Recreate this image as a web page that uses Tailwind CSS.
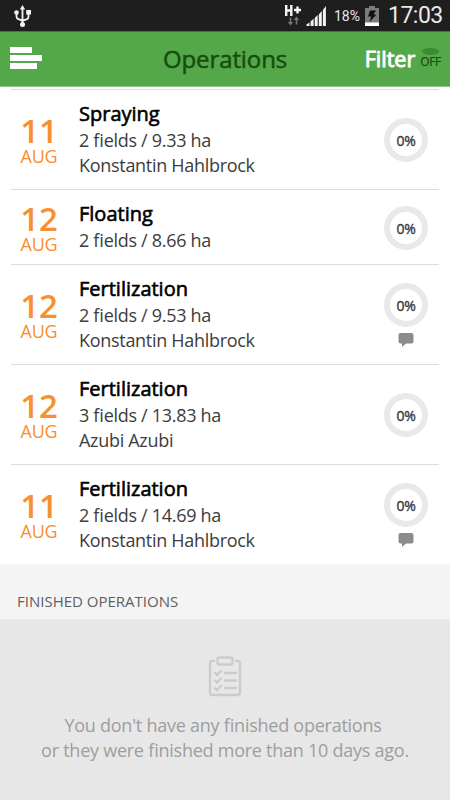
<!DOCTYPE html>
<html lang="en">
<head>
  <meta charset="UTF-8" />
  <meta name="viewport" content="width=device-width, initial-scale=1.0" />
  <script src="https://cdn.jsdelivr.net/npm/@tailwindcss/browser@4"></script>
  <title>Operations</title>
</head>
<body class="w-[450px] h-[800px] overflow-hidden flex flex-col bg-white font-['Open_Sans',sans-serif]">
  <!-- Status bar -->
  <div class="h-[31px] shrink-0 bg-[#1e1e1e] flex items-center pl-[13px] font-[Roboto,sans-serif] text-[#e8e8e8]">
    <svg class="mt-[2px] w-[20px] h-[24px]" viewBox="0 0 20 24" fill="none" stroke="#f5f5f5" stroke-width="1.8">
      <path d="M9.500 4v16M3.500 8v3.500q0 2 2 2.700l4 1.500 4.500-1.500q1.500-.7 1.500-2.700V8" />
      <path d="M9.500 0l2.700 4.500H6.800z" fill="#f5f5f5" stroke="none" />
      <circle cx="9.500" cy="19.500" r="2.500" fill="#f5f5f5" stroke="none" />
      <circle cx="3.500" cy="7.500" r="2.300" fill="#f5f5f5" stroke="none" />
      <path d="M13.200 5h4.800v4.500h-4.800z" fill="#f5f5f5" stroke="none" />
    </svg>
    <svg class="ml-[251px] w-[18px] h-[24px]" viewBox="0 0 18 24" fill="none">
      <path d="M2.200 1v11M7.300 1v11M2 6.500h5.500M10 6h7M13.500 2.500V9.500" stroke="#f5f5f5" stroke-width="2.400" />
      <path d="M6.500 13.500v6M12.500 20.500v-6" stroke="#777" stroke-width="1.600" />
      <path d="M3.700 18h5.600l-2.800 3.500zM9.700 16h5.600l-2.800-3.500z" fill="#777" />
    </svg>
    <svg class="ml-[4px] w-[21px] h-[24px]" viewBox="0 0 21 24" fill="#f2f2f2">
      <path d="M.5 22v-1.500l3-2V22zM4.600 22v-4.700l3-2.500V22zM8.700 22v-8l3-3v11zM12.800 22V10.500l3-3.500v15zM16.900 22V6l3-4v20z" />
    </svg>
    <span class="ml-[7px] w-[27px] text-[14px] leading-[20px] whitespace-nowrap pt-[1px]">18%</span>
    <svg class="ml-[3px] w-[16px] h-[22px]" viewBox="0 0 16 22">
      <path d="M5 1h6v2h4v18H1V3h4z" fill="#7c7c7c" />
      <path d="M1 17.500h14V21H1z" fill="#fff" />
      <path d="M6 5.500h6l-2.500 4h3L5.500 17l1.700-5.500H4z" fill="#111" />
    </svg>
    <span class="ml-[8px] text-[23px] leading-[30px] tracking-[-0.5px]">17:03</span>
  </div>

  <!-- Header -->
  <div class="h-[56px] shrink-0 bg-[#54a849] border-t border-t-[#397d30] border-b border-b-[#8cc685] grid grid-cols-[100px_1fr_100px] items-center">
    <div class="pl-[10px] pb-[2px] space-y-[2px]">
      <div class="w-[22px] h-[6px] bg-white"></div>
      <div class="w-[32px] h-[6px] bg-white"></div>
      <div class="w-[27px] h-[6px] bg-white"></div>
    </div>
    <h1 class="text-center text-[24px] leading-[30px] tracking-[-0.1px] text-[#174d10] [-webkit-text-stroke:0.5px]">Operations</h1>
    <div class="flex items-center justify-end pr-[9px] gap-[5px]">
      <span class="text-[21.500px] leading-[28px] text-white [-webkit-text-stroke:0.9px]">Filter</span>
      <div class="flex flex-col items-center pb-[1px]">
        <div class="w-[17px] h-[7px] rounded-[50%] bg-[#3c8b32]"></div>
        <span class="text-[12px] leading-[14px] tracking-[-0.3px] text-[#174d10] [-webkit-text-stroke:0.2px]">OFF</span>
      </div>
    </div>
  </div>

  <!-- Operations list -->
  <div class="shrink-0 px-[11px] pt-[2px] text-[18px] leading-[25px] text-[#3c3c3c] [font-feature-settings:'liga']">
    <div class="h-[101px] border-y border-[#dcdcdc] pt-[11px] flex">
      <div class="w-[56px] pt-[13px] text-center text-[#f98f2e]">
        <p class="text-[33px] leading-[33px] font-semibold">11</p>
        <p class="leading-[18px] tracking-[-0.2px]">AUG</p>
      </div>
      <div class="pl-[12px] flex-1 tracking-[-0.3px]">
        <h2 class="mb-[2px] text-[20px] tracking-normal text-black [-webkit-text-stroke:0.6px]">Spraying</h2>
        <p>2 fields / 9.33 ha</p>
        <p>Konstantin Hahlbrock</p>
      </div>
      <div class="mt-[17px] mr-[11px] w-[44px] h-[44px] rounded-full border-[6px] border-[#e9e9e9] flex items-center justify-center text-[14px] tracking-[-0.2px] [-webkit-text-stroke:0.4px]">0%</div>
    </div>
    <div class="h-[75px] border-b border-[#dcdcdc] pt-[11px] flex">
      <div class="w-[56px] pt-[1px] text-center text-[#f98f2e]">
        <p class="text-[33px] leading-[33px] font-semibold">12</p>
        <p class="leading-[18px] tracking-[-0.2px]">AUG</p>
      </div>
      <div class="pl-[12px] flex-1 tracking-[-0.3px]">
        <h2 class="mb-[2px] text-[20px] tracking-normal text-black [-webkit-text-stroke:0.6px]">Floating</h2>
        <p>2 fields / 8.66 ha</p>
      </div>
      <div class="mt-[5px] mr-[11px] w-[44px] h-[44px] rounded-full border-[6px] border-[#e9e9e9] flex items-center justify-center text-[14px] tracking-[-0.2px] [-webkit-text-stroke:0.4px]">0%</div>
    </div>
    <div class="h-[100px] border-b border-[#dcdcdc] pt-[11px] flex">
      <div class="w-[56px] pt-[13px] text-center text-[#f98f2e]">
        <p class="text-[33px] leading-[33px] font-semibold">12</p>
        <p class="leading-[18px] tracking-[-0.2px]">AUG</p>
      </div>
      <div class="pl-[12px] flex-1 tracking-[-0.3px]">
        <h2 class="mb-[2px] text-[20px] tracking-normal text-black [-webkit-text-stroke:0.6px]">Fertilization</h2>
        <p>2 fields / 9.53 ha</p>
        <p>Konstantin Hahlbrock</p>
      </div>
      <div class="mt-[7px] mr-[11px] flex flex-col items-center">
        <div class="w-[44px] h-[44px] rounded-full border-[6px] border-[#e9e9e9] flex items-center justify-center text-[14px] tracking-[-0.2px] [-webkit-text-stroke:0.4px]">0%</div>
        <svg class="mt-[6px] w-[16px] h-[14px]" viewBox="0 0 16 14" fill="#8c8c8c"><path d="M2.500 0h11Q15.500 0 15.500 2v6.500q0 2-2 2H8L4 14v-3.500H2.500q-2 0-2-2V2q0-2 2-2z" /></svg>
      </div>
    </div>
    <div class="h-[100px] border-b border-[#dcdcdc] pt-[11px] flex">
      <div class="w-[56px] pt-[13px] text-center text-[#f98f2e]">
        <p class="text-[33px] leading-[33px] font-semibold">12</p>
        <p class="leading-[18px] tracking-[-0.2px]">AUG</p>
      </div>
      <div class="pl-[12px] flex-1 tracking-[-0.3px]">
        <h2 class="mb-[2px] text-[20px] tracking-normal text-black [-webkit-text-stroke:0.6px]">Fertilization</h2>
        <p>3 fields / 13.83 ha</p>
        <p>Azubi Azubi</p>
      </div>
      <div class="mt-[17px] mr-[11px] w-[44px] h-[44px] rounded-full border-[6px] border-[#e9e9e9] flex items-center justify-center text-[14px] tracking-[-0.2px] [-webkit-text-stroke:0.4px]">0%</div>
    </div>
    <div class="h-[99px] pt-[11px] flex">
      <div class="w-[56px] pt-[13px] text-center text-[#f98f2e]">
        <p class="text-[33px] leading-[33px] font-semibold">11</p>
        <p class="leading-[18px] tracking-[-0.2px]">AUG</p>
      </div>
      <div class="pl-[12px] flex-1 tracking-[-0.3px]">
        <h2 class="mb-[2px] text-[20px] tracking-normal text-black [-webkit-text-stroke:0.6px]">Fertilization</h2>
        <p>2 fields / 14.69 ha</p>
        <p>Konstantin Hahlbrock</p>
      </div>
      <div class="mt-[7px] mr-[11px] flex flex-col items-center">
        <div class="w-[44px] h-[44px] rounded-full border-[6px] border-[#e9e9e9] flex items-center justify-center text-[14px] tracking-[-0.2px] [-webkit-text-stroke:0.4px]">0%</div>
        <svg class="mt-[6px] w-[16px] h-[14px]" viewBox="0 0 16 14" fill="#8c8c8c"><path d="M2.500 0h11Q15.500 0 15.500 2v6.500q0 2-2 2H8L4 14v-3.500H2.500q-2 0-2-2V2q0-2 2-2z" /></svg>
      </div>
    </div>
  </div>

  <!-- Finished operations -->
  <div class="h-[55px] shrink-0 bg-[#f4f4f4] pl-[17px] pt-[27px] text-[15px] leading-[20px] text-[#606060]">FINISHED OPERATIONS</div>
  <div class="flex-1 bg-[#e7e7e7] pt-[37px] flex flex-col items-center text-center text-[18px] leading-[25px] tracking-[-0.25px] [font-feature-settings:'liga'] text-[#9e9e9e]">
    <svg class="w-[34px] h-[42px] shrink-0" viewBox="0 0 34 42" fill="none" stroke="#cbcbcb" stroke-width="2.300" stroke-linecap="round">
      <path d="M6 5H4.500Q2 5 2 7.500v29Q2 39 4.500 39h25q2.500 0 2.500-2.500v-29Q32 5 29.500 5H28" />
      <rect x="9.500" y="1.500" width="15" height="7" rx="1.500" />
      <path d="M7 17l2 2 4-4M7 24.500l2 2 4-4M7 32l2 2 4-4M17 17h11M17 24.500h11M17 32h11" />
    </svg>
    <p class="mt-[15px] pr-[4px]">You don't have any finished operations</p>
    <p>or they were finished more than 10 days ago.</p>
  </div>
</body>
</html>
